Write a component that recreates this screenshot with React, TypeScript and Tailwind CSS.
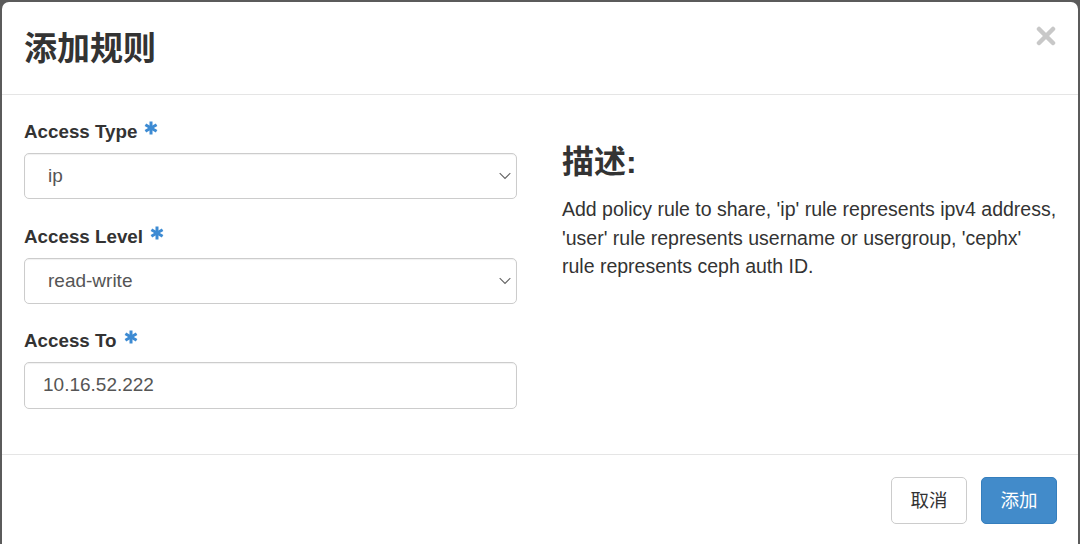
const font = { fontFamily: '"Liberation Sans", "Noto Sans CJK SC", Arial, sans-serif' }

function Star() {
  return (
    <svg width="14" height="14" viewBox="0 0 14 14" className="ml-[7px] -mt-[10px] inline-block align-middle">
      <g stroke="#3d8bd3" strokeWidth="3" strokeLinecap="butt">
        <line x1="7" y1="0.5" x2="7" y2="13.5" />
        <line x1="1.4" y1="3.75" x2="12.6" y2="10.25" />
        <line x1="1.4" y1="10.25" x2="12.6" y2="3.75" />
      </g>
    </svg>
  )
}

function Chevron() {
  return (
    <svg width="12" height="7" viewBox="0 0 12 7" className="absolute left-0 top-1/2 -translate-y-1/2">
      <polyline points="0.7,0.7 6,6 11.3,0.7" fill="none" stroke="#666" strokeWidth="1.2" />
    </svg>
  )
}

function Label({ text }: { text: string }) {
  return (
    <div className="mb-[8px] flex h-[25px] items-center text-[18.8px] font-bold text-[#333]">
      <span>{text}</span>
      <Star />
    </div>
  )
}

function Select({ value }: { value: string }) {
  return (
    <div className="relative flex h-[46px] items-center rounded-[5px] border border-[#ccc] bg-white pl-[23px] pr-3 text-[19px] text-[#555] shadow-[inset_0_1px_1px_rgba(0,0,0,0.06)]">
      {value}
      <div className="absolute right-[5px] top-0 h-full w-[12px]">
        <Chevron />
      </div>
    </div>
  )
}

export default function App() {
  return (
    <div className="h-[544px] overflow-hidden bg-[#5b5b5b] px-[2px] pt-[2px]" style={font}>
      <div className="h-[600px] rounded-t-[7px] bg-white">
        <header className="flex h-[93px] items-center justify-between border-b border-[#e5e5e5] pl-[22px] pr-[22px]">
          <h2 className="text-[33px] font-bold leading-none text-[#333]">添加规则</h2>
          <svg width="20" height="20" viewBox="0 0 20 20" className="-mt-[24px]">
            <g stroke="#c8c8c8" strokeWidth="4.5" strokeLinecap="round">
              <line x1="3" y1="3" x2="17" y2="17" />
              <line x1="17" y1="3" x2="3" y2="17" />
            </g>
          </svg>
        </header>
        <div className="flex h-[360px] border-b border-[#e5e5e5] pl-[22px] pt-[25px]">
          <div className="w-[493px]">
            <Label text="Access Type" />
            <div className="mb-[26px]">
              <Select value="ip" />
            </div>
            <Label text="Access Level" />
            <div className="mb-[25px]">
              <Select value="read-write" />
            </div>
            <Label text="Access To" />
            <div className="flex h-[47px] items-center rounded-[5px] border border-[#ccc] pl-[18px] text-[19px] text-[#555] shadow-[inset_0_1px_1px_rgba(0,0,0,0.06)]">
              10.16.52.222
            </div>
          </div>
          <div className="ml-[45px] w-[496px] pt-[24px]">
            <h3 className="h-[36px] text-[32px] font-bold leading-[36px] text-[#333]">描述:</h3>
            <p className="mt-[15px] text-[19.5px] leading-[28.5px] text-[#333]">
              Add policy rule to share, 'ip' rule represents ipv4 address, 'user' rule represents username or usergroup, 'cephx' rule represents ceph auth ID.
            </p>
          </div>
        </div>
        <footer className="flex justify-end gap-[14px] pr-[21px] pt-[22px]">
          <button className="h-[47px] w-[76px] rounded-[5px] border border-[#ccc] bg-white text-[18.5px] text-[#333]">取消</button>
          <button className="h-[47px] w-[76px] rounded-[5px] border border-[#357ebd] bg-[#428bca] text-[18.5px] text-white">添加</button>
        </footer>
      </div>
    </div>
  )
}
